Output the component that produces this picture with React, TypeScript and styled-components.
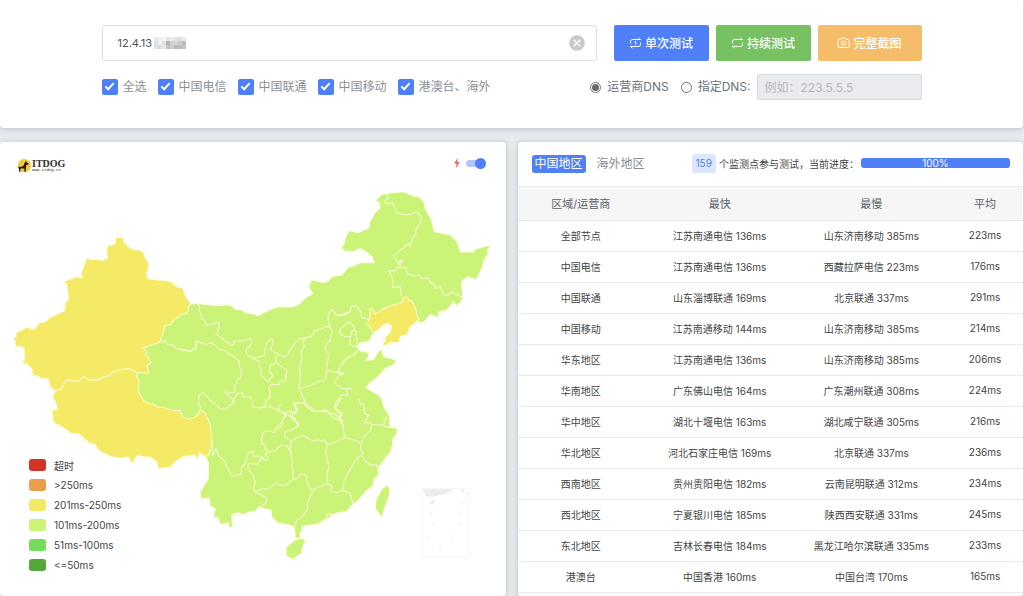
import React, { useState } from "react";
import styled, { createGlobalStyle } from "styled-components";

const GlobalStyle = createGlobalStyle`
  *, *::before, *::after { box-sizing: border-box; }
  body {
    margin: 0;
    background: #e7ebf0;
    color: #444;
    font-family: Inter, "Noto Sans CJK SC", sans-serif;
    font-size: 10px;
  }
  button, input { font-family: inherit; }
`;

const Page = styled.div`
  display: flex;
  flex-direction: column;
  gap: 14px;
  min-height: 100vh;
  padding-right: 1px;
`;

const Card = styled.section`
  background: #fff;
  border-radius: 4px;
  box-shadow: 0 1px 6px rgba(60, 75, 100, 0.26);
`;

const SearchCard = styled(Card)`
  padding: 25px 16px 28px;
  border-top-left-radius: 0;
  border-top-right-radius: 0;
`;

const Form = styled.form`
  display: flex;
  flex-direction: column;
  gap: 13px;
  max-width: 820px;
  margin: 0 auto;
`;

const FormRow = styled.div`
  display: flex;
  align-items: center;
  justify-content: space-between;
`;

const HostField = styled.div`
  position: relative;
  display: flex;
  align-items: center;
  flex: 1;
  height: 36px;
  margin-right: 17px;
  padding: 0 11px 0 15px;
  border: 1px solid #dcdfe6;
  border-radius: 3px;
`;

const HostInput = styled.input`
  flex: 1;
  min-width: 0;
  padding: 0;
  border: 0;
  outline: 0;
  background: transparent;
  color: #50555c;
  font-size: 11px;
`;

const Mask = styled.svg`
  position: absolute;
  left: 51px;
  top: 10px;
  width: 34px;
  height: 14px;
`;

const ClearButton = styled.button`
  display: flex;
  padding: 0;
  border: 0;
  background: none;
`;

const Actions = styled.div`
  display: flex;
  gap: 7px;
`;

const ActionButton = styled.button<{ $color: string; $wide?: boolean }>`
  display: flex;
  align-items: center;
  justify-content: center;
  gap: 3px;
  width: ${(p) => (p.$wide ? 104 : 95)}px;
  height: 36px;
  padding: 0 0 1px;
  border: 0;
  border-radius: 2px;
  background: ${(p) => p.$color};
  color: #fff;
  font-size: 12px;
  font-weight: 500;
`;

const Options = styled.div<{ $gap: number }>`
  display: flex;
  align-items: center;
  gap: ${(p) => p.$gap}px;
`;

const CheckLabel = styled.label`
  display: flex;
  align-items: center;
  gap: 5px;
  color: #8a9099;
  font-size: 12px;
  line-height: 16px;
  white-space: nowrap;
`;

const RadioLabel = styled(CheckLabel)`
  gap: 6px;
  color: #6c737b;
`;

const Checkbox = styled.input`
  appearance: none;
  display: flex;
  justify-content: center;
  width: 16px;
  height: 16px;
  margin: 0;
  border: 1px solid #4f80f7;
  border-radius: 2px;
  &:checked { background: #4f80f7; }
  &:checked::after {
    content: "";
    width: 5px;
    height: 9px;
    margin-top: 1px;
    border: solid #fff;
    border-width: 0 2px 2px 0;
    transform: rotate(42deg);
  }
`;

const Radio = styled.input`
  appearance: none;
  display: flex;
  align-items: center;
  justify-content: center;
  width: 11px;
  height: 11px;
  margin: 0;
  border: 1px solid #757575;
  border-radius: 50%;
  &:checked::after {
    content: "";
    width: 7px;
    height: 7px;
    border-radius: 50%;
    background: #6a6a6a;
  }
`;

const DnsInput = styled.input`
  width: 165px;
  height: 26px;
  margin-left: 6px;
  padding: 0 7px;
  border: 1px solid #d5d9e0;
  border-radius: 2px;
  background: #e9ebef;
  font-size: 12px;
  &::placeholder { color: #b3b8bf; opacity: 1; }
`;

const DnsChoice = styled.div`
  display: flex;
  align-items: center;
`;

const Columns = styled.main`
  display: grid;
  grid-template-columns: 1fr 1fr;
  gap: 12px;
  flex: 1;
`;

const MapCard = styled(Card)`
  position: relative;
`;

const MapHeader = styled.header`
  display: flex;
  align-items: flex-start;
  justify-content: space-between;
  height: 38px;
  padding: 15px 20px 0 17px;
`;

const Brand = styled.a`
  display: flex;
  align-items: center;
  gap: 1px;
  margin-top: 2px;
  color: #352f2c;
  text-decoration: none;
`;

const BrandText = styled.span`
  display: flex;
  flex-direction: column;
  font-family: "Liberation Serif", serif;
  font-size: 10px;
  font-weight: 700;
  line-height: 8px;
`;

const BrandUrl = styled.span`
  font-family: "Liberation Mono", monospace;
  font-size: 4px;
  font-weight: 400;
  line-height: 5px;
`;

const SwitchLabel = styled.label`
  display: flex;
  align-items: center;
  gap: 5px;
`;

const Switch = styled.input`
  appearance: none;
  display: flex;
  align-items: center;
  justify-content: flex-end;
  width: 20px;
  height: 7px;
  margin: 2px 0;
  border-radius: 4px;
  background: #b3c7fb;
  &::after {
    content: "";
    width: 11px;
    height: 11px;
    flex: none;
    border-radius: 50%;
    background: #4f80f7;
  }
  &:not(:checked) { justify-content: flex-start; }
`;

const MapDrawing = styled.svg`
  display: block;
  width: 100%;
  height: auto;
`;

const Legend = styled.ul`
  position: absolute;
  left: 29px;
  top: 313px;
  margin: 0;
  padding: 0;
  list-style: none;
`;

const LegendItem = styled.li`
  display: flex;
  align-items: center;
  gap: 8px;
  height: 20px;
  color: #444;
`;

const Swatch = styled.span<{ $color: string }>`
  width: 17px;
  height: 12px;
  border-radius: 3px;
  background: ${(p) => p.$color};
`;

const ResultHeader = styled.header`
  display: flex;
  align-items: center;
  height: 44px;
  padding: 0 13px 0 14px;
`;

const Tab = styled.button<{ $active: boolean }>`
  height: 18px;
  margin-right: 8px;
  padding: 0 3px;
  border: 0;
  border-radius: 3px;
  background: ${(p) => (p.$active ? "#4f80f7" : "transparent")};
  color: ${(p) => (p.$active ? "#fff" : "#868c93")};
  font-size: 12px;
  line-height: 18px;
  white-space: nowrap;
`;

const Progress = styled.div`
  display: flex;
  flex: 1;
  align-items: center;
  margin-left: 36px;
  padding-bottom: 2px;
  white-space: nowrap;
`;

const CountBadge = styled.span`
  margin-right: 3px;
  padding: 0 4px;
  border-radius: 3px;
  background: #dce6fe;
  color: #4f80f7;
  line-height: 19px;
`;

const Bar = styled.div`
  flex: 1;
  height: 10px;
  margin-left: 2px;
  border-radius: 3px;
  background: #4f80f7;
  color: #fff;
  line-height: 10px;
  text-align: center;
`;

const Table = styled.table`
  width: 100%;
  border-collapse: collapse;
  table-layout: fixed;
`;

const Th = styled.th<{ $width: string }>`
  width: ${(p) => p.$width};
  height: 34px;
  padding: 0 0 2px;
  border-top: 1px solid #eceff3;
  border-bottom: 1px solid #e6eaef;
  background: #f6f6f7;
  color: #5a6066;
  font-size: 11px;
  font-weight: 400;
`;

const Td = styled.td`
  height: 31px;
  padding: 0 0 2px;
  border-bottom: 1px solid #e6eaef;
  color: #444;
  text-align: center;
`;

const isps = ["全选", "中国电信", "中国联通", "中国移动", "港澳台、海外"];

const legend = [
  ["#d33226", "超时"],
  ["#e99e4b", ">250ms"],
  ["#f4ea65", "201ms-250ms"],
  ["#caf377", "101ms-200ms"],
  ["#77dc5b", "51ms-100ms"],
  ["#55a73a", "<=50ms"],
];

const headings = [
  ["区域/运营商", "25%"],
  ["最快", "30%"],
  ["最慢", "30%"],
  ["平均", "15%"],
];

const results = [
  ["全部节点", "江苏南通电信 136ms", "山东济南移动 385ms", "223ms"],
  ["中国电信", "江苏南通电信 136ms", "西藏拉萨电信 223ms", "176ms"],
  ["中国联通", "山东淄博联通 169ms", "北京联通 337ms", "291ms"],
  ["中国移动", "江苏南通移动 144ms", "山东济南移动 385ms", "214ms"],
  ["华东地区", "江苏南通电信 136ms", "山东济南移动 385ms", "206ms"],
  ["华南地区", "广东佛山电信 164ms", "广东潮州联通 308ms", "224ms"],
  ["华中地区", "湖北十堰电信 163ms", "湖北咸宁联通 305ms", "216ms"],
  ["华北地区", "河北石家庄电信 169ms", "北京联通 337ms", "236ms"],
  ["西南地区", "贵州贵阳电信 182ms", "云南昆明联通 312ms", "234ms"],
  ["西北地区", "宁夏银川电信 185ms", "陕西西安联通 331ms", "245ms"],
  ["东北地区", "吉林长春电信 184ms", "黑龙江哈尔滨联通 335ms", "233ms"],
  ["港澳台", "中国香港 160ms", "中国台湾 170ms", "165ms"],
];

const mainland =
  "572,912 592,910 615,913 655,917 675,914 695,918 705,928 725,930 735,938 762,942 773,947 790,937 830,921 878,921 898,912 915,894 937,881 925,860 933,840 972,848 985,842 995,829 1025,825 1043,802 1060,798 1080,788 1122,788 1115,770 1095,753 1078,745 1060,755 1033,753 1028,747 1020,747 1032,730 1035,712 1047,692 1072,698 1108,682 1107,670 1125,637 1139,624 1137,608 1125,602 1145,583 1165,580 1208,575 1240,588 1255,590 1270,606 1275,628 1292,658 1302,695 1335,702 1350,705 1370,725 1380,756 1417,756 1430,745 1471,735 1460,752 1462,762 1448,785 1447,800 1427,838 1402,830 1383,845 1387,890 1382,905 1368,917 1358,904 1350,918 1335,932 1313,936 1316,952 1288,943 1272,965 1258,968 1220,920 1150,940 1120,998 1113,1008 1110,1020 1090,1027 1080,1027 1070,1040 1082,1054 1102,1056 1106,1068 1095,1082 1120,1078 1133,1055 1143,1047 1150,1070 1188,1080 1182,1092 1155,1104 1140,1122 1125,1136 1110,1146 1096,1162 1112,1172 1130,1182 1142,1192 1145,1200 1150,1220 1168,1248 1168,1280 1190,1285 1190,1300 1176,1318 1177,1335 1170,1355 1150,1380 1132,1405 1135,1425 1121,1435 1118,1455 1095,1475 1075,1498 1058,1512 1050,1520 1040,1532 1010,1538 995,1543 988,1552 970,1560 955,1570 905,1578 905,1592 898,1600 902,1612 885,1614 883,1580 870,1575 832,1567 814,1550 812,1528 790,1525 777,1518 765,1532 745,1535 730,1543 712,1537 694,1543 697,1580 685,1580 685,1567 670,1572 658,1570 655,1552 640,1550 645,1525 630,1518 627,1492 603,1497 600,1475 610,1458 625,1435 625,1390 615,1365 590,1300 400,1210 390,1100 400,1030 470,960 545,915";

const xinjiang =
  "348,52 371,52 371,66 388,83 400,89 415,90 430,97 435,113 446,130 443,150 438,162 445,176 510,184 535,203 547,203 558,233 571,250 563,262 566,270 558,280 545,283 520,300 512,313 494,316 487,345 478,366 428,384 438,392 437,403 453,427 441,436 446,459 412,458 385,446 360,449 335,457 330,467 310,470 290,481 262,478 250,469 235,485 200,479 190,493 183,507 165,512 150,500 145,476 125,475 112,467 96,464 97,448 80,430 62,427 75,418 71,383 60,378 46,380 45,362 39,355 48,350 48,338 85,320 90,327 105,326 118,308 135,305 150,292 194,272 196,248 206,238 200,192 190,184 232,170 247,174 243,160 260,113 272,118 300,118 305,122 322,114 319,85 326,76 345,71";

const tibet =
  "165,122 183,117 190,103 200,89 235,95 250,79 262,88 290,91 310,80 330,77 335,67 360,59 385,56 412,68 410,80 417,90 415,125 430,150 442,160 455,160 475,172 490,172 520,182 540,180 548,200 565,207 585,200 595,190 600,180 612,185 622,205 628,215 632,235 635,285 625,315 612,318 598,307 592,327 585,315 550,318 525,335 512,350 475,355 470,335 450,320 430,320 415,315 405,322 397,342 385,320 360,324 330,318 310,308 295,300 285,282 270,280 235,250 215,250 180,226 162,220 155,180 172,178 168,158 158,140";

const liaoning =
  "180,384 190,390 194,403 215,388 240,377 262,371 275,368 278,352 288,350 295,360 304,362 317,388 318,402 326,418 300,440 290,464 270,468 266,487 240,487 225,497 217,493 219,486 226,483 222,475 240,455 243,437 230,430 215,437 205,449 190,458 178,438 168,430 178,418";

/* Province borders, grouped by the area of the map they run through */
const borders = [
  {
    at: "translate(540 840)",
    lines: [
      "52,70 58,80 57,92 65,105 63,113 75,125 78,137 85,132 100,133 108,125 118,130 115,145 110,158 107,162 125,173 138,186 145,188 150,196 158,194 162,182 175,184 190,180 212,176 214,187 210,198 200,204 197,218 205,228 217,234 240,230 252,225 255,205 258,190 272,177 278,180 276,195 270,210 290,220 305,228 318,228 328,210 345,188 355,178 372,173 382,172 398,166 402,152 420,148 435,140 448,140 443,112 447,95 458,90 466,103 485,104 510,93",
      "217,234 235,242 241,265 243,285 255,298 265,305 270,295 278,288 268,275 270,255 287,247 288,225",
      "287,247 305,260 320,270 317,290 315,303 298,303 295,313 272,312 265,325 270,332 268,355 257,360 255,375 245,383",
      "48,207 48,182 75,194 90,187 105,195 115,205 130,210 145,220 162,230 176,242 178,260 185,275 180,292 172,300 163,315 165,335 145,338 137,332 135,338 148,350 160,358 155,365",
      "0,208 12,212 20,210 25,215 38,208 48,207",
      "62,388 55,368 56,345 66,338 80,348 92,363 105,372 120,385 135,388 148,375 160,370 162,355 172,340 185,338 190,348 212,352 217,365 218,382 245,383 268,378 285,387 310,398 335,410 345,415 350,430 355,440",
      "310,398 318,405 308,418 305,435 290,450",
      "376,172 368,185 372,200 362,215 365,235 358,260 360,290 356,325 372,360 372,368 380,380 395,392 420,394 435,388 445,398 465,402 485,420 490,450",
      "372,368 338,368 345,385 352,392 338,405 335,410",
      "356,325 390,317 410,305 432,300 437,290 438,270 470,277 482,282 490,278",
      "448,140 455,150 450,180 440,190 433,205 445,225 443,240 440,250 438,270",
      "510,225 500,235 480,258 474,275 490,280 472,290 463,308 485,325 515,326",
      "497,325 503,343 480,345 480,355 470,375 462,378 470,395 485,402 478,415 488,425",
    ],
  },
  {
    at: "translate(0 660)",
    lines: ["478,366 495,362 502,373 520,375 528,386 555,388 570,395 585,382 588,362"],
  },
  {
    at: "translate(930 540)",
    lines: [
      "228,42 235,52 222,65 230,72 245,68 252,78 260,100 285,104 308,101 315,94 328,102 333,115 326,135 316,148 316,165 305,175 300,200 296,190 270,210 250,228 262,245 270,262",
      "270,262 268,248 277,246 275,239 265,246",
      "262,262 287,263 290,280 310,287 325,285 335,295 355,294 362,310 372,312 375,325 388,318 400,345 412,345 425,335 445,347 457,350",
      "262,262 255,272 235,272 245,290 248,322 270,320 272,348",
      "120,395 122,380 140,377 145,388 152,395 155,413 178,417",
      "75,405 90,408 105,403 120,395",
      "88,460 90,445 100,438 115,425 128,435 132,450 123,455 122,468 105,470 88,460",
      "132,450 140,455 135,465 140,475 140,495 130,500 118,492 120,470",
      "143,510 130,525 110,535 95,545",
    ],
  },
  {
    at: "translate(570 1200)",
    lines: [
      "283,48 275,65 255,85 252,97 238,92 220,95 213,118 215,130 225,138 222,145 235,155 255,152 265,140 275,135 292,138 300,155 302,122 285,110 283,95 300,92 322,78 325,68 310,60 300,48 302,32 280,38 283,48",
      "280,38 262,30 272,10",
      "302,32 308,40 320,30 315,12 322,8 343,8",
      "343,0 350,14 375,32 415,35 425,50 450,62 458,75 460,95 463,112",
      "450,62 445,50 455,38 437,25 435,12 440,0 455,-5",
      "302,122 335,105 350,112 365,122 385,118 395,125 400,118 412,133 430,128 463,112 485,118 500,122 512,130",
      "412,133 405,150 412,180 415,200 410,230 412,250",
      "512,130 520,110 540,92 545,72",
      "512,130 510,145 518,160 495,180 490,190 475,215 462,240 457,272",
      "515,165 520,178 540,195 555,192 565,200",
      "505,-5 510,12 520,10 522,40 535,45 530,55 522,65 545,72 575,75 598,82",
      "580,75 582,60 590,50",
      "412,250 425,258 420,272 440,277 460,270 480,280 488,312",
      "308,238 325,232 330,222 347,225 350,240 357,265 368,270 380,262 395,258 400,252 412,250",
      "368,270 360,290 350,310 352,325 335,350 320,360 313,377",
      "302,155 308,215 308,238 285,255 270,255 260,248 235,265 215,265 195,275 190,265 195,245 188,225 172,205 175,190 200,192 215,175 210,168 225,180 235,178 225,160 235,155",
      "65,115 68,165 78,145 88,170 100,178 125,228 152,222 155,200 165,190 175,155 190,152 188,168 210,168",
      "195,275 215,285 230,295 225,310 215,315",
      "408,350 415,340 425,343 425,352 408,353",
      "300,375 300,390",
    ],
  },
];

function ChinaMap() {
  return (
    <MapDrawing viewBox="0 540 1515 1230" role="img" aria-label="中国地图">
      <g stroke="#fbfbd8" strokeWidth="3" strokeLinejoin="round">
        <g fill="#caf377">
          <polygon points={mainland} />
          <g transform="translate(570 1200)">
            <polygon points="315,418 335,414 347,422 338,437 333,460 322,465 310,477 288,467 288,440" />
            <polygon points="590,255 598,265 597,285 580,330 574,355 570,345 555,325 557,300 575,265" />
          </g>
        </g>
        <g fill="none">
          {borders.map((group) => (
            <g key={group.at} transform={group.at}>
              {group.lines.map((line) => (
                <polyline key={line} points={line} />
              ))}
            </g>
          ))}
        </g>
        <g fill="#f4ea65">
          <polygon points={xinjiang} transform="translate(0 660)" />
          <polygon points={tibet} transform="translate(0 1050)" />
          <polygon points={liaoning} transform="translate(930 540)" />
        </g>
      </g>
      <g transform="translate(1200 1410)" fill="#ececec">
        <rect x="64" y="54" width="142" height="206" fill="none" stroke="#f5f5f5" strokeWidth="3" />
        <path d="M66 56H158L135 70L95 80L78 78ZM181 56H194L188 68ZM92 92L104 88L98 103L90 102Z" />
        <path
          d="M203 68L195 82M187 94L182 105M179 118V131M179 155L173 167M158 194L149 209M124 235L115 239M79 197L83 209M93 170L102 160M92 126L95 138"
          stroke="#f0f0f0"
          strokeWidth="3"
        />
        <circle cx="9" cy="28" r="2" />
      </g>
    </MapDrawing>
  );
}

function LoopIcon({ single }: { single?: boolean }) {
  return (
    <svg width="13" height="12" viewBox="0 0 13 12" fill="none" stroke="#fff" strokeWidth="1">
      <path d="M1.5 6.5V4.5Q1.5 2.5 3.5 2.5H11.5L9.6 0.8M11.5 5.5V7.5Q11.5 9.5 9.5 9.5H1.5L3.4 11.2" />
      {single && <path d="M5.6 5L6.7 4.4V8" />}
    </svg>
  );
}

function CameraIcon() {
  return (
    <svg width="13" height="12" viewBox="0 0 13 12" fill="none" stroke="#fff" strokeWidth="1">
      <path d="M2 2.5H3.5L4.5 1H8.5L9.5 2.5H11Q12.2 2.5 12.2 3.7V9.3Q12.2 10.5 11 10.5H2Q0.8 10.5 0.8 9.3V3.7Q0.8 2.5 2 2.5Z" />
      <circle cx="6.5" cy="6.4" r="2.3" />
      <circle cx="6.5" cy="6.4" r="0.4" />
    </svg>
  );
}

const maskTones = [
  ["#d9dadb", "#e4e4e5", "#f1f1f1", "#cfcfd0", "#e3e3e4", "#cdcdce", "#c9c9ca", "#dededf"],
  ["#e3e3e4", "#f0f0f0", "#dfdfe0", "#b4b4b6", "#d2d2d3", "#d8d8d9", "#cacacb", "#bdbdbf"],
  ["#e0e0e1", "#dddddf", "#e9e9e9", "#c2c2c3", "#cdcdcf", "#b9b9bb", "#bcbcbd", "#c3c3c4"],
];

export default function App() {
  const [host, setHost] = useState("12.4.13");
  const [china, setChina] = useState(true);
  return (
    <>
      <GlobalStyle />
      <Page>
        <SearchCard>
          <Form onSubmit={(e) => e.preventDefault()}>
            <FormRow>
              <HostField>
                <HostInput aria-label="IP" value={host} onChange={(e) => setHost(e.target.value)} />
                <Mask viewBox="0 0 34 14" aria-hidden="true">
                  {maskTones.map((row, y) =>
                    row.map((tone, x) => (
                      <rect key={`${x}-${y}`} x={x * 4} y={1 + y * 4} width="4" height="4" fill={tone} opacity={y === 0 ? 0.6 : 1} />
                    ))
                  )}
                </Mask>
                <ClearButton type="button" aria-label="清空" onClick={() => setHost("")}>
                  <svg width="16" height="16" viewBox="0 0 16 16">
                    <circle cx="8" cy="8" r="7.8" fill="#c8c9cc" />
                    <path d="M4.7 4.7L11.3 11.3M11.3 4.7L4.7 11.3" stroke="#fff" strokeWidth="1.4" />
                  </svg>
                </ClearButton>
              </HostField>
              <Actions>
                <ActionButton $color="#4f80f7"><LoopIcon single />单次测试</ActionButton>
                <ActionButton type="button" $color="#77c163"><LoopIcon />持续测试</ActionButton>
                <ActionButton type="button" $color="#f5bd6a" $wide><CameraIcon />完整截图</ActionButton>
              </Actions>
            </FormRow>
            <FormRow>
              <Options $gap={11}>
                {isps.map((name) => (
                  <CheckLabel key={name}>
                    <Checkbox type="checkbox" defaultChecked />
                    {name}
                  </CheckLabel>
                ))}
              </Options>
              <Options $gap={12}>
                <RadioLabel>
                  <Radio type="radio" name="dns" defaultChecked />
                  运营商DNS
                </RadioLabel>
                <DnsChoice>
                  <RadioLabel>
                    <Radio type="radio" name="dns" />
                    指定DNS:
                  </RadioLabel>
                  <DnsInput aria-label="DNS" placeholder="例如：223.5.5.5" disabled />
                </DnsChoice>
              </Options>
            </FormRow>
          </Form>
        </SearchCard>
        <Columns>
          <MapCard>
            <MapHeader>
              <Brand href="#">
                <svg width="14" height="14" viewBox="0 0 42 42">
                  <circle cx="22" cy="20" r="20" fill="#f3c93a" />
                  <path
                    d="M26 5L28 10L35 13L34 16L28 18L27 25L26 39H23L22 29L13 28L10 31L10 39H7L6 30L4 25L6 22L8 25L19 21L23 12Z"
                    fill="#1c1815"
                  />
                </svg>
                <BrandText>
                  ITDOG
                  <BrandUrl>www.itdog.cn</BrandUrl>
                </BrandText>
              </Brand>
              <SwitchLabel>
                <svg width="8" height="12" viewBox="0 0 8 12" aria-hidden="true">
                  <path d="M4.6 1L1.2 6.6H3.6L3 11L6.8 5.2H4.3Z" fill="#ee5b5b" />
                </svg>
                <Switch type="checkbox" role="switch" aria-label="极速模式" defaultChecked />
              </SwitchLabel>
            </MapHeader>
            <ChinaMap />
            <Legend>
              {legend.map(([color, text]) => (
                <LegendItem key={text}>
                  <Swatch $color={color} />
                  {text}
                </LegendItem>
              ))}
            </Legend>
          </MapCard>
          <Card>
            <ResultHeader>
              <Tab $active={china} onClick={() => setChina(true)}>中国地区</Tab>
              <Tab $active={!china} onClick={() => setChina(false)}>海外地区</Tab>
              <Progress>
                <CountBadge>159</CountBadge>
                个监测点参与测试，当前进度：
                <Bar>100%</Bar>
              </Progress>
            </ResultHeader>
            <Table>
              <thead>
                <tr>
                  {headings.map(([text, width]) => (
                    <Th key={text} $width={width}>{text}</Th>
                  ))}
                </tr>
              </thead>
              <tbody>
                {results.map((row) => (
                  <tr key={row[0]}>
                    {row.map((cell, i) => (
                      <Td key={i}>{cell}</Td>
                    ))}
                  </tr>
                ))}
              </tbody>
            </Table>
          </Card>
        </Columns>
      </Page>
    </>
  );
}
